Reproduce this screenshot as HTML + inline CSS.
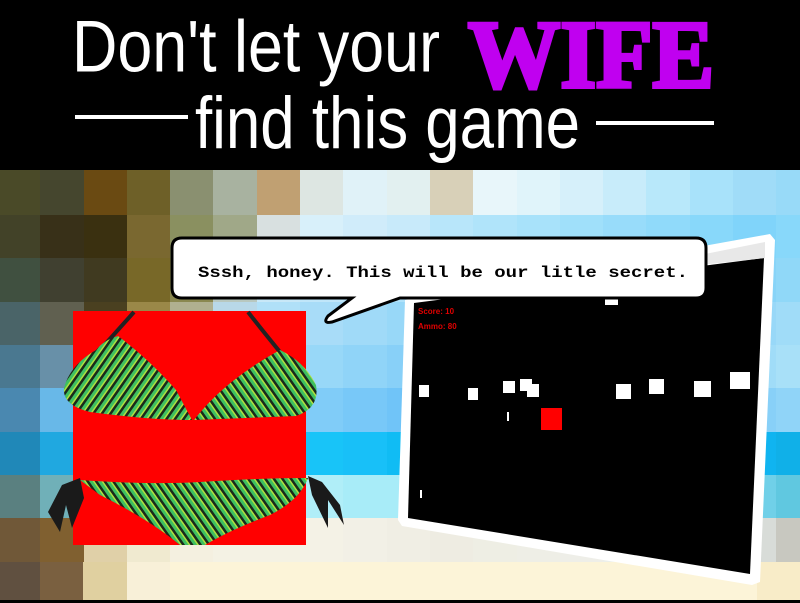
<!DOCTYPE html>
<html><head><meta charset="utf-8"><style>
html,body{margin:0;padding:0;width:800px;height:600px;overflow:hidden;background:#000}
#bg{position:absolute;left:-3px;top:170px;width:823px;height:433px;display:grid;grid-template-columns:repeat(19,43.3px);grid-template-rows:45px 43px 44px 43px 43px 44px 43px 43px 44px 44px}
svg{position:absolute;left:0;top:0}
</style></head><body>
<div id="bg">
<div style="background:#4a4a28"></div><div style="background:#45462e"></div><div style="background:#6a4a12"></div><div style="background:#6e6028"></div><div style="background:#8a9070"></div><div style="background:#a8b2a0"></div><div style="background:#c0a072"></div><div style="background:#dde6e2"></div><div style="background:#e0f2f8"></div><div style="background:#e2f0f0"></div><div style="background:#d8d0b8"></div><div style="background:#e8f6fa"></div><div style="background:#e0f4fa"></div><div style="background:#d6f0fa"></div><div style="background:#c8ecfa"></div><div style="background:#b8e8fa"></div><div style="background:#a8e2fa"></div><div style="background:#a0dcf8"></div><div style="background:#98daf8"></div>
<div style="background:#424228"></div><div style="background:#383018"></div><div style="background:#3a3010"></div><div style="background:#7a6830"></div><div style="background:#8a9060"></div><div style="background:#a0a888"></div><div style="background:#d8e0e0"></div><div style="background:#d8f0fa"></div><div style="background:#d0ecfa"></div><div style="background:#c8eafa"></div><div style="background:#b8e6fa"></div><div style="background:#b0e4fa"></div><div style="background:#a8e2fa"></div><div style="background:#a0e0fa"></div><div style="background:#98dcfa"></div><div style="background:#90dafa"></div><div style="background:#88d8fa"></div><div style="background:#80d4fa"></div><div style="background:#88d8fa"></div>
<div style="background:#405040"></div><div style="background:#404030"></div><div style="background:#403a20"></div><div style="background:#786828"></div><div style="background:#8a8850"></div><div style="background:#b8c8c0"></div><div style="background:#c8e8f8"></div><div style="background:#c0e6fa"></div><div style="background:#b8e4fa"></div><div style="background:#b0e2fa"></div><div style="background:#a8e0fa"></div><div style="background:#a0dcfa"></div><div style="background:#98daf8"></div><div style="background:#90d8f8"></div><div style="background:#88d4f8"></div><div style="background:#80d2f8"></div><div style="background:#80d0f8"></div><div style="background:#88d4f8"></div><div style="background:#90d8f8"></div>
<div style="background:#4a6468"></div><div style="background:#606050"></div><div style="background:#4a4020"></div><div style="background:#9a8848"></div><div style="background:#b0b090"></div><div style="background:#b8d8e8"></div><div style="background:#b0e0f8"></div><div style="background:#a8dcf8"></div><div style="background:#a0daf8"></div><div style="background:#98d8f8"></div><div style="background:#90d4f8"></div><div style="background:#88d2f8"></div><div style="background:#80d0f8"></div><div style="background:#80d0f8"></div><div style="background:#80d0f8"></div><div style="background:#88d2f8"></div><div style="background:#90d4f8"></div><div style="background:#98d8f8"></div><div style="background:#a0dcf8"></div>
<div style="background:#4a7890"></div><div style="background:#6890a8"></div><div style="background:#8a8060"></div><div style="background:#a0b8c0"></div><div style="background:#a8d8f0"></div><div style="background:#a8dcf8"></div><div style="background:#a0daf8"></div><div style="background:#98d8f8"></div><div style="background:#90d4f8"></div><div style="background:#88d0f8"></div><div style="background:#80cef8"></div><div style="background:#78ccf8"></div><div style="background:#78ccf8"></div><div style="background:#78ccf8"></div><div style="background:#80d0f8"></div><div style="background:#88d4f8"></div><div style="background:#90d8f8"></div><div style="background:#a0dcf8"></div><div style="background:#a8e0f8"></div>
<div style="background:#4a88b0"></div><div style="background:#68b8e8"></div><div style="background:#80c8f0"></div><div style="background:#90d0f0"></div><div style="background:#98d4f8"></div><div style="background:#90d0f8"></div><div style="background:#88cef8"></div><div style="background:#80ccf8"></div><div style="background:#78c8f8"></div><div style="background:#70c4f8"></div><div style="background:#68c2f8"></div><div style="background:#60c0f8"></div><div style="background:#60c0f8"></div><div style="background:#60c0f8"></div><div style="background:#68c2f8"></div><div style="background:#70c4f8"></div><div style="background:#78c8f8"></div><div style="background:#88d0f8"></div><div style="background:#90d4f8"></div>
<div style="background:#2088b8"></div><div style="background:#20a8e0"></div><div style="background:#18c0f4"></div><div style="background:#18c8f8"></div><div style="background:#18c8f8"></div><div style="background:#18c8f8"></div><div style="background:#18c8f8"></div><div style="background:#18c4f8"></div><div style="background:#18c0f8"></div><div style="background:#10bcf4"></div><div style="background:#10b8f0"></div><div style="background:#10b8f0"></div><div style="background:#10b8f0"></div><div style="background:#10b8f0"></div><div style="background:#10b8f0"></div><div style="background:#10b8f0"></div><div style="background:#10b8f0"></div><div style="background:#10b4f0"></div><div style="background:#10b0e8"></div>
<div style="background:#5a8080"></div><div style="background:#70b0b8"></div><div style="background:#98dce8"></div><div style="background:#a8e8f0"></div><div style="background:#b0eef8"></div><div style="background:#b0eef8"></div><div style="background:#b0eef8"></div><div style="background:#b0eef8"></div><div style="background:#a8ecf8"></div><div style="background:#a8ecf8"></div><div style="background:#a8eaf8"></div><div style="background:#a8eaf8"></div><div style="background:#a8eaf8"></div><div style="background:#a8eaf8"></div><div style="background:#a8e8f8"></div><div style="background:#a0e4f4"></div><div style="background:#90dcf0"></div><div style="background:#70d0e8"></div><div style="background:#60c8e0"></div>
<div style="background:#705838"></div><div style="background:#806030"></div><div style="background:#e0d0a8"></div><div style="background:#f0ead0"></div><div style="background:#f4f0e0"></div><div style="background:#f4f2e4"></div><div style="background:#f4f2e4"></div><div style="background:#f4f2e6"></div><div style="background:#f2f0e6"></div><div style="background:#f0eee4"></div><div style="background:#eeece2"></div><div style="background:#eeeee4"></div><div style="background:#eeeee6"></div><div style="background:#eeeee8"></div><div style="background:#ecefea"></div><div style="background:#e4e8e4"></div><div style="background:#e0e4e0"></div><div style="background:#d8dcd8"></div><div style="background:#c8c8c0"></div>
</div>
<div style="position:absolute;left:0;top:562px;width:800px;height:38px;display:flex">
<div style="width:40px;background:#605040"></div><div style="width:43px;background:#7a6040"></div><div style="width:44px;background:#e0d0a0"></div><div style="width:43px;background:#f8f0d8"></div><div style="flex:1;background:#fcf4d8"></div><div style="width:43px;background:#f8ecc8"></div>
</div>
<svg width="800" height="600" viewBox="0 0 800 600">
<defs>
<pattern id="leaf" width="7" height="7" patternUnits="userSpaceOnUse" patternTransform="rotate(35)">
<rect width="7" height="7" fill="#1a2a1a"/><rect width="3" height="7" fill="#3ec060"/><rect x="3" width="1.5" height="7" fill="#b0e040"/>
</pattern>
<pattern id="leaf2" width="7" height="7" patternUnits="userSpaceOnUse" patternTransform="rotate(-35)">
<rect width="7" height="7" fill="#1a2a1a"/><rect width="3" height="7" fill="#3ec060"/><rect x="3" width="1.5" height="7" fill="#b0e040"/>
</pattern>
</defs>
<rect x="0" y="0" width="800" height="170" fill="#000"/>
<text x="72" y="72" font-family="Liberation Sans, sans-serif" font-size="68" fill="#fff" textLength="368" lengthAdjust="spacingAndGlyphs" transform="translate(0,-6) scale(1,1.08)">Don't let your</text>
<text x="195" y="148" font-family="Liberation Sans, sans-serif" font-size="68" fill="#fff" textLength="385" lengthAdjust="spacingAndGlyphs" transform="translate(0,-12) scale(1,1.08)">find this game</text>
<text x="468" y="87" font-family="Liberation Serif, serif" font-weight="bold" font-size="96" fill="#c000f0" stroke="#c000f0" stroke-width="4" textLength="246" lengthAdjust="spacingAndGlyphs">WIFE</text>
<rect x="75" y="115" width="113" height="4" fill="#fff"/>
<rect x="596" y="121" width="118" height="4" fill="#fff"/>
<polygon points="405,300 770,234 775,240 760,582 752,585 402,526 398,520" fill="#fff"/>
<polygon points="414,303 764,258 750,574 408,518" fill="#000"/>
<polygon points="700,255 765,242 765,258 700,265" fill="#e8e8e8"/>
<text x="418" y="314" font-family="Liberation Sans, sans-serif" font-size="8" font-weight="bold" fill="#e00000">Score: 10</text>
<text x="418" y="329" font-family="Liberation Sans, sans-serif" font-size="8" font-weight="bold" fill="#e00000">Ammo: 80</text>
<g fill="#fff">
<rect x="605" y="299" width="13" height="6"/>
<rect x="419" y="385" width="10" height="12"/><rect x="468" y="388" width="10" height="12"/><rect x="503" y="381" width="12" height="12"/><rect x="520" y="379" width="12" height="12"/><rect x="527" y="384" width="12" height="13"/>
<rect x="616" y="384" width="15" height="15"/><rect x="649" y="379" width="15" height="15"/><rect x="694" y="381" width="17" height="16"/><rect x="730" y="372" width="20" height="17"/>
<rect x="507" y="412" width="2" height="9"/><rect x="420" y="490" width="2" height="8"/>
</g>
<rect x="541" y="408" width="21" height="22" fill="#f00"/>
<path d="M182,238 H696 Q706,238 706,248 V288 Q706,298 696,298 H400 L332,322 Q322,324 328,316 L352,298 H182 Q172,298 172,288 V248 Q172,238 182,238 Z" fill="#fff" stroke="#000" stroke-width="3"/>
<text x="198" y="277" font-family="Liberation Mono, monospace" font-weight="bold" font-size="16" fill="#000" textLength="490" lengthAdjust="spacingAndGlyphs">Sssh, honey. This will be our litle secret.</text>
<rect x="73" y="311" width="233" height="234" fill="#f00"/>
<path d="M134,312 Q118,330 98,352" stroke="#222" stroke-width="4" fill="none"/>
<path d="M248,312 Q262,330 280,352" stroke="#222" stroke-width="4" fill="none"/>
<path d="M96,350 Q104,340 118,336 Q150,360 176,390 L192,420 Q150,420 90,412 Q62,405 64,388 Q70,365 96,350 Z" fill="url(#leaf)"/>
<path d="M280,350 Q305,362 316,385 Q320,408 296,416 L194,420 Q225,380 280,350 Z" fill="url(#leaf2)"/>
<path d="M80,480 Q150,485 200,482 Q260,478 308,478 Q300,500 270,515 Q230,530 205,545 L180,545 Q150,520 100,495 Z" fill="url(#leaf2)"/>
<path d="M80,478 L62,485 L48,512 L60,532 L66,505 L72,528 L84,498 Z" fill="#1a1a1a"/>
<path d="M308,476 L322,482 L340,505 L344,525 L328,500 L328,528 L312,495 Z" fill="#1a1a1a"/>
</svg>
</body></html>
